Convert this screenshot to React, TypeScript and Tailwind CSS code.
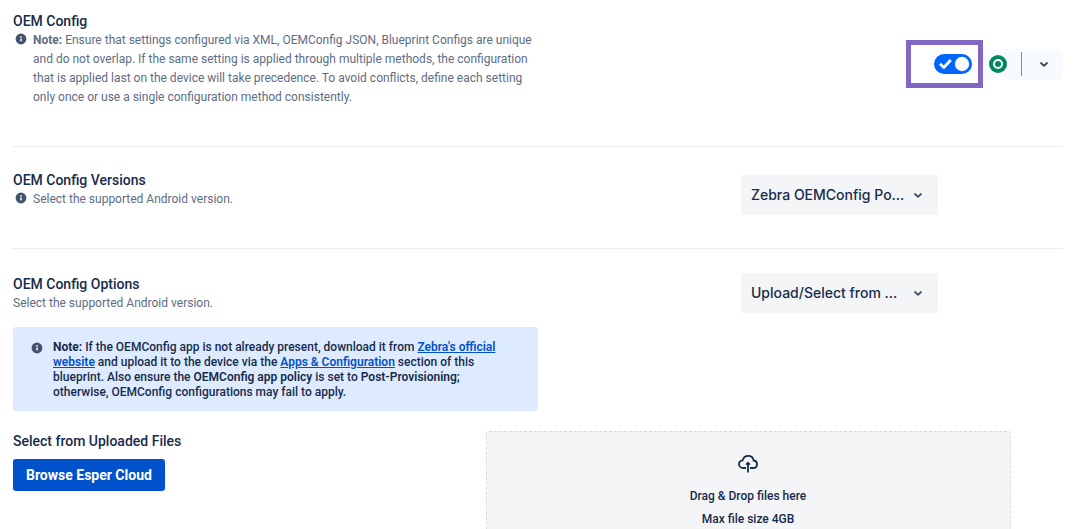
import { useState, type ReactNode } from "react";
import clsx from "clsx";

function InfoIcon({ className }: { className?: string }) {
  return (
    <svg viewBox="0 0 12 12" className={clsx("size-3 shrink-0 text-[#42526e]", className)} aria-hidden="true">
      <circle cx="6" cy="6" r="5.4" fill="currentColor" />
      <circle cx="6" cy="4" r="0.9" fill="#dfe3ea" />
      <rect x="5.1" y="5.6" width="1.8" height="2.8" rx="0.6" fill="#dfe3ea" />
    </svg>
  );
}

function ChevronIcon({ className }: { className?: string }) {
  return (
    <svg viewBox="0 0 10 10" className={clsx("size-[10px]", className)} aria-hidden="true">
      <path d="M2 4 5 6.8l3-2.8" fill="none" stroke="currentColor" strokeWidth="1.8" strokeLinecap="round" strokeLinejoin="round" />
    </svg>
  );
}

function CloudUploadIcon() {
  return (
    <svg viewBox="0 0 20 20" className="size-5" fill="none" stroke="currentColor" strokeWidth="1.8" aria-hidden="true">
      <path d="M8 14H5.2C2.8 14 1 12.4 1 10.2 1 8.2 2.5 6.7 4.7 6.4 5.3 3.7 7.5 1.9 10.2 1.9c2.9 0 5 1.9 5.4 4.600 2 .2 3.400 1.700 3.400 3.700C19 12.4 17.4 14 15.2 14H12" strokeLinejoin="round" />
      <path d="M10 18.400V9" />
      <path d="M8.200 10.200 10 8.500l1.800 1.700z" fill="currentColor" strokeWidth="1.2" strokeLinejoin="round" />
    </svg>
  );
}

function Toggle() {
  const [on, setOn] = useState(true);
  return (
    <label className="relative block h-5 w-[38px] cursor-pointer">
      <input
        type="checkbox"
        checked={on}
        onChange={(e) => setOn(e.target.checked)}
        aria-label="Enable OEM Config"
        className="block h-5 w-[38px] appearance-none rounded-full bg-[#7a869a] checked:bg-[#0065ff]"
      />
      <svg viewBox="0 0 38 20" className="pointer-events-none absolute inset-0 size-full" aria-hidden="true">
        {on && (
          <path d="m6 9.800 3.800 3.700 7-7.500" fill="none" stroke="#fff" strokeWidth="2.8" strokeLinejoin="round" />
        )}
        <circle cx={on ? 28 : 10} cy="10" r="7.2" fill="#fafbfc" />
      </svg>
    </label>
  );
}

function Dropdown({ label, value, className }: { label: string; value: string; className?: string }) {
  return (
    <div className={clsx("relative mr-[125px] w-[197px]", className)}>
      <select
        aria-label={label}
        className="h-10 w-full appearance-none rounded-[3px] bg-[#f4f5f7] pr-8 pl-[10px] font-['Inter',sans-serif] text-sm font-medium text-[#172b4d]"
      >
        <option>{value}</option>
      </select>
      <ChevronIcon className="pointer-events-none absolute top-[15px] right-[15px] text-[#42526e]" />
    </div>
  );
}

function Heading({ children }: { children: ReactNode }) {
  return <h2 className="text-sm leading-5 font-medium">{children}</h2>;
}

function Hint({ children }: { children: ReactNode }) {
  return (
    <div className="flex gap-[6px] pl-[2px] text-xs leading-[19px] text-[#5e6c84]">
      <InfoIcon className="mt-[2px]" />
      <p>{children}</p>
    </div>
  );
}

export default function App() {
  return (
    <main className="h-screen overflow-hidden bg-white pr-[18px] pl-[13px] font-['Roboto',sans-serif] text-[#172b4d]">
      <section className="flex items-start justify-between border-b border-[#ebecf0] pt-[11px] pb-[39px]">
        <div className="w-1/2">
          <Heading>OEM Config</Heading>
          <Hint>
            <b>Note:</b> Ensure that settings configured via XML, OEMConfig JSON, Blueprint Configs are unique and do not
            overlap. If the same setting is applied through multiple methods, the configuration that is applied last on
            the device will take precedence. To avoid conflicts, define each setting only once or use a single
            configuration method consistently.
          </Hint>
        </div>
        <div className="mt-[29px] flex items-center">
          <div className="flex h-12 w-[77px] items-center justify-end border-[5px] border-[#8067c4] pr-[6px]">
            <Toggle />
          </div>
          <div className="flex h-[31px] w-20 items-center rounded-r-[3px] bg-[#f7faff] pl-[6px]">
            <svg viewBox="0 0 18 18" className="size-[18px]" aria-hidden="true">
              <circle cx="9" cy="9" r="9" fill="#00875a" />
              <circle cx="9" cy="9" r="4" fill="none" stroke="#fff" strokeWidth="2" />
            </svg>
            <span className="ml-[14px] h-6 w-px bg-[#6b8fc4]" />
            <button type="button" aria-label="More options" className="flex h-full flex-1 items-center justify-center pl-[2px] text-[#344563]">
              <ChevronIcon />
            </button>
          </div>
        </div>
      </section>

      <section className="flex items-start justify-between border-b border-[#ebecf0] pt-[23px] pb-[39px]">
        <div>
          <Heading>OEM Config Versions</Heading>
          <Hint>Select the supported Android version.</Hint>
        </div>
        <Dropdown label="OEM Config Versions" value="Zebra OEMConfig Po..." className="mt-[5px] -mb-[6px]" />
      </section>

      <section className="pt-6">
        <div className="flex items-start justify-between">
          <div className="pt-px">
            <Heading>OEM Config Options</Heading>
            <p className="text-xs leading-[19px] text-[#5e6c84]">Select the supported Android version.</p>
          </div>
          <Dropdown label="OEM Config Options" value="Upload/Select from ..." />
        </div>

        <div className="mt-[14px] flex w-1/2 gap-[10px] rounded-[3px] bg-[#deebff] pt-[13px] pr-6 pb-[11px] pl-[18px] text-xs leading-[15px] font-medium">
          <InfoIcon className="mt-[2px]" />
          <p>
            <b>Note:</b> If the OEMConfig app is not already present, download it from{" "}
            <a href="#" className="font-semibold text-[#0052cc] underline">
              Zebra's official website
            </a>{" "}
            and upload it to the device via the{" "}
            <a href="#" className="font-semibold text-[#0052cc] underline">
              Apps &amp; Configuration
            </a>{" "}
            section of this blueprint. Also ensure the <b className="font-semibold">OEMConfig app policy</b> is set to{" "}
            <b className="font-semibold">Post-Provisioning;</b> otherwise, OEMConfig configurations may fail to apply.
          </p>
        </div>

        <div className="mt-5 flex">
          <div className="w-[45%]">
            <Heading>Select from Uploaded Files</Heading>
            <button type="button" className="mt-2 h-8 rounded-[3px] bg-[#0052cc] px-[13px] text-sm font-bold text-white">
              Browse Esper Cloud
            </button>
          </div>
          <div className="flex w-1/2 flex-col items-center rounded-[3px] border border-dashed border-[#d9dde3] bg-[#f4f5f7] pt-[22px] pb-8 text-xs leading-[23px] font-medium">
            <CloudUploadIcon />
            <p className="mt-[11px]">Drag &amp; Drop files here</p>
            <p>Max file size 4GB</p>
          </div>
        </div>
      </section>
    </main>
  );
}
